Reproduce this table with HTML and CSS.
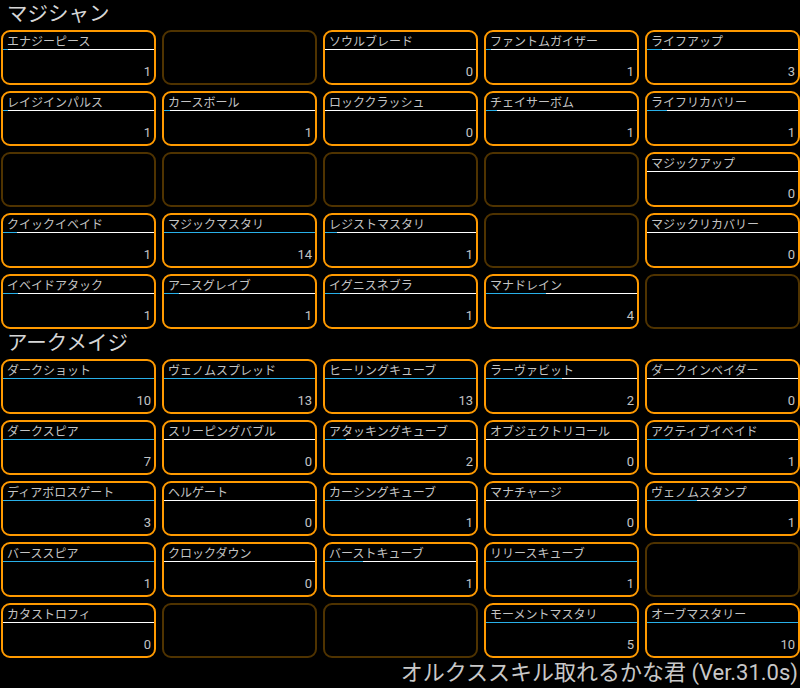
FILE: index.html
```html
<!DOCTYPE html>
<html lang="ja">
<head>
<meta charset="utf-8">
<link rel="stylesheet" href="styles.css">
</head>
<body>
<div class="page">
  <div class="title">マジシャン</div>
  <div class="grid">
    <div class="cell"><div class="name">エナジーピース</div><div class="bar"><div class="fill" style="width:3%"></div></div><div class="count">1</div></div>
    <div class="cell empty"></div>
    <div class="cell"><div class="name">ソウルブレード</div><div class="bar"><div class="fill" style="width:0%"></div></div><div class="count">0</div></div>
    <div class="cell"><div class="name">ファントムガイザー</div><div class="bar"><div class="fill" style="width:3%"></div></div><div class="count">1</div></div>
    <div class="cell"><div class="name">ライフアップ</div><div class="bar"><div class="fill" style="width:10%"></div></div><div class="count">3</div></div>

    <div class="cell"><div class="name">レイジインパルス</div><div class="bar"><div class="fill" style="width:3%"></div></div><div class="count">1</div></div>
    <div class="cell"><div class="name">カースボール</div><div class="bar"><div class="fill" style="width:4%"></div></div><div class="count">1</div></div>
    <div class="cell"><div class="name">ロッククラッシュ</div><div class="bar"><div class="fill" style="width:0%"></div></div><div class="count">0</div></div>
    <div class="cell"><div class="name">チェイサーボム</div><div class="bar"><div class="fill" style="width:7%"></div></div><div class="count">1</div></div>
    <div class="cell"><div class="name">ライフリカバリー</div><div class="bar"><div class="fill" style="width:13%"></div></div><div class="count">1</div></div>

    <div class="cell empty"></div>
    <div class="cell empty"></div>
    <div class="cell empty"></div>
    <div class="cell empty"></div>
    <div class="cell"><div class="name">マジックアップ</div><div class="bar"><div class="fill" style="width:0%"></div></div><div class="count">0</div></div>

    <div class="cell"><div class="name">クイックイベイド</div><div class="bar"><div class="fill" style="width:9%"></div></div><div class="count">1</div></div>
    <div class="cell"><div class="name">マジックマスタリ</div><div class="bar"><div class="fill" style="width:100%"></div></div><div class="count">14</div></div>
    <div class="cell"><div class="name">レジストマスタリ</div><div class="bar"><div class="fill" style="width:8%"></div></div><div class="count">1</div></div>
    <div class="cell empty"></div>
    <div class="cell"><div class="name">マジックリカバリー</div><div class="bar"><div class="fill" style="width:0%"></div></div><div class="count">0</div></div>

    <div class="cell"><div class="name">イベイドアタック</div><div class="bar"><div class="fill" style="width:10%"></div></div><div class="count">1</div></div>
    <div class="cell"><div class="name">アースグレイブ</div><div class="bar"><div class="fill" style="width:10%"></div></div><div class="count">1</div></div>
    <div class="cell"><div class="name">イグニスネブラ</div><div class="bar"><div class="fill" style="width:10%"></div></div><div class="count">1</div></div>
    <div class="cell"><div class="name">マナドレイン</div><div class="bar"><div class="fill" style="width:40%"></div></div><div class="count">4</div></div>
    <div class="cell empty"></div>
  </div>

  <div class="title">アークメイジ</div>
  <div class="grid">
    <div class="cell"><div class="name">ダークショット</div><div class="bar"><div class="fill" style="width:100%"></div></div><div class="count">10</div></div>
    <div class="cell"><div class="name">ヴェノムスプレッド</div><div class="bar"><div class="fill" style="width:100%"></div></div><div class="count">13</div></div>
    <div class="cell"><div class="name">ヒーリングキューブ</div><div class="bar"><div class="fill" style="width:100%"></div></div><div class="count">13</div></div>
    <div class="cell"><div class="name">ラーヴァビット</div><div class="bar"><div class="fill" style="width:50%"></div></div><div class="count">2</div></div>
    <div class="cell"><div class="name">ダークインベイダー</div><div class="bar"><div class="fill" style="width:0%"></div></div><div class="count">0</div></div>

    <div class="cell"><div class="name">ダークスピア</div><div class="bar"><div class="fill" style="width:100%"></div></div><div class="count">7</div></div>
    <div class="cell"><div class="name">スリーピングバブル</div><div class="bar"><div class="fill" style="width:0%"></div></div><div class="count">0</div></div>
    <div class="cell"><div class="name">アタッキングキューブ</div><div class="bar"><div class="fill" style="width:14%"></div></div><div class="count">2</div></div>
    <div class="cell"><div class="name">オブジェクトリコール</div><div class="bar"><div class="fill" style="width:0%"></div></div><div class="count">0</div></div>
    <div class="cell"><div class="name">アクティブイベイド</div><div class="bar"><div class="fill" style="width:15%"></div></div><div class="count">1</div></div>

    <div class="cell"><div class="name">ディアボロスゲート</div><div class="bar"><div class="fill" style="width:100%"></div></div><div class="count">3</div></div>
    <div class="cell"><div class="name">ヘルゲート</div><div class="bar"><div class="fill" style="width:0%"></div></div><div class="count">0</div></div>
    <div class="cell"><div class="name">カーシングキューブ</div><div class="bar"><div class="fill" style="width:10%"></div></div><div class="count">1</div></div>
    <div class="cell"><div class="name">マナチャージ</div><div class="bar"><div class="fill" style="width:0%"></div></div><div class="count">0</div></div>
    <div class="cell"><div class="name">ヴェノムスタンプ</div><div class="bar"><div class="fill" style="width:33%"></div></div><div class="count">1</div></div>

    <div class="cell"><div class="name">バーススピア</div><div class="bar"><div class="fill" style="width:100%"></div></div><div class="count">1</div></div>
    <div class="cell"><div class="name">クロックダウン</div><div class="bar"><div class="fill" style="width:0%"></div></div><div class="count">0</div></div>
    <div class="cell"><div class="name">バーストキューブ</div><div class="bar"><div class="fill" style="width:25%"></div></div><div class="count">1</div></div>
    <div class="cell"><div class="name">リリースキューブ</div><div class="bar"><div class="fill" style="width:100%"></div></div><div class="count">1</div></div>
    <div class="cell empty"></div>

    <div class="cell"><div class="name">カタストロフィ</div><div class="bar"><div class="fill" style="width:0%"></div></div><div class="count">0</div></div>
    <div class="cell empty"></div>
    <div class="cell empty"></div>
    <div class="cell"><div class="name">モーメントマスタリ</div><div class="bar"><div class="fill" style="width:100%"></div></div><div class="count">5</div></div>
    <div class="cell"><div class="name">オーブマスタリー</div><div class="bar"><div class="fill" style="width:100%"></div></div><div class="count">10</div></div>
  </div>

  <div class="footer">オルクススキル取れるかな君 (Ver.31.0s)</div>
</div>
</body>
</html>
```

FILE: styles.css
```css
html, body {
  margin: 0;
  padding: 0;
  background: #000;
}

body {
  font-family: Roboto, "Noto Sans CJK JP", sans-serif;
  color: #c4c4c4;
  width: 800px;
  height: 688px;
  overflow: hidden;
}

.page {
  display: flex;
  flex-direction: column;
}

.title {
  height: 30px;
  font-size: 20.5px;
  line-height: 29px;
  padding-left: 7px;
  color: #d6d6d6;
}

.grid {
  display: grid;
  grid-template-columns: repeat(5, 155px);
  grid-auto-rows: 55px;
  column-gap: 6px;
  row-gap: 6px;
  padding-left: 1px;
}

.cell {
  box-sizing: border-box;
  border: 2px solid #ff9a00;
  border-radius: 9px;
  display: flex;
  flex-direction: column;
  overflow: hidden;
}

.cell.empty {
  border-color: #4f3300;
}

.name {
  font-size: 12px;
  line-height: 14px;
  height: 14px;
  padding-left: 4px;
  padding-top: 3px;
  white-space: nowrap;
  color: #c4c4c4;
}

.bar {
  height: 1px;
  background: #fff;
  display: flex;
}

.fill {
  height: 1px;
  background: #29b0e8;
}

.count {
  margin-top: auto;
  text-align: right;
  font-size: 13px;
  line-height: 15px;
  padding-right: 3px;
  padding-bottom: 4px;
  color: #c4c4c4;
}

.footer {
  height: 30px;
  text-align: right;
  font-size: 22px;
  line-height: 30px;
  padding-right: 2px;
  color: #c8c8c8;
}
```
